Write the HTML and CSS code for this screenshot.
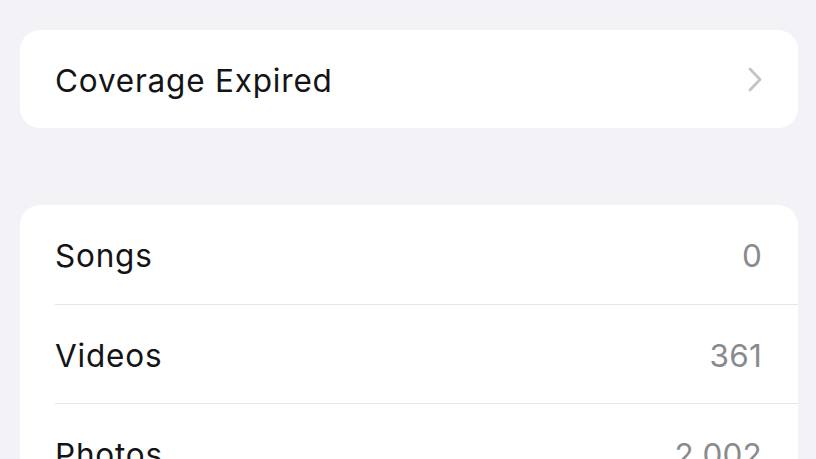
FILE: index.html
```html
<!DOCTYPE html>
<html lang="en">
<head>
<meta charset="utf-8">
<title>About</title>
<link rel="stylesheet" href="styles.css">
</head>
<body>
<div class="page">
  <section class="group">
    <div class="row">
      <span class="label">Coverage Expired</span>
      <svg class="chevron" width="14" height="25" viewBox="0 0 14 25" aria-hidden="true">
        <path d="M2 2 L12 12.5 L2 23" fill="none" stroke="#c4c4c8" stroke-width="2.8" stroke-linecap="round" stroke-linejoin="round"/>
      </svg>
    </div>
  </section>
  <section class="group group-list">
    <div class="row">
      <span class="label">Songs</span>
      <span class="value">0</span>
    </div>
    <div class="row">
      <span class="label">Videos</span>
      <span class="value">361</span>
    </div>
    <div class="row">
      <span class="label">Photos</span>
      <span class="value">2,002</span>
    </div>
  </section>
</div>
</body>
</html>
```

FILE: styles.css
```css
* { box-sizing: border-box; }
html, body {
  margin: 0;
  padding: 0;
  background: #f2f2f7;
  height: 100%;
  overflow: hidden;
}
body {
  font-family: Inter, "Liberation Sans", Arial, sans-serif;
  color: #141416;
}
.page {
  padding: 30px 18px 0 20px;
  display: flex;
  flex-direction: column;
  gap: 77px;
}
.group {
  background: #ffffff;
  border-radius: 20px;
  overflow: hidden;
}
.row {
  height: 98px;
  display: flex;
  align-items: center;
  justify-content: space-between;
  padding: 0 36px 0 35px;
}
.group-list .row {
  height: 99px;
}
.group-list .row + .row {
  border-top: 1.5px solid #e6e6ea;
  margin-left: 35px;
  padding-left: 0;
}
.label,
.value {
  font-size: 31.5px;
  line-height: 1;
  padding-top: 3px;
}
.label {
  letter-spacing: 0.8px;
}
.value {
  color: #8a8a8e;
  letter-spacing: 0.2px;
}
.chevron {
  display: block;
}
```
